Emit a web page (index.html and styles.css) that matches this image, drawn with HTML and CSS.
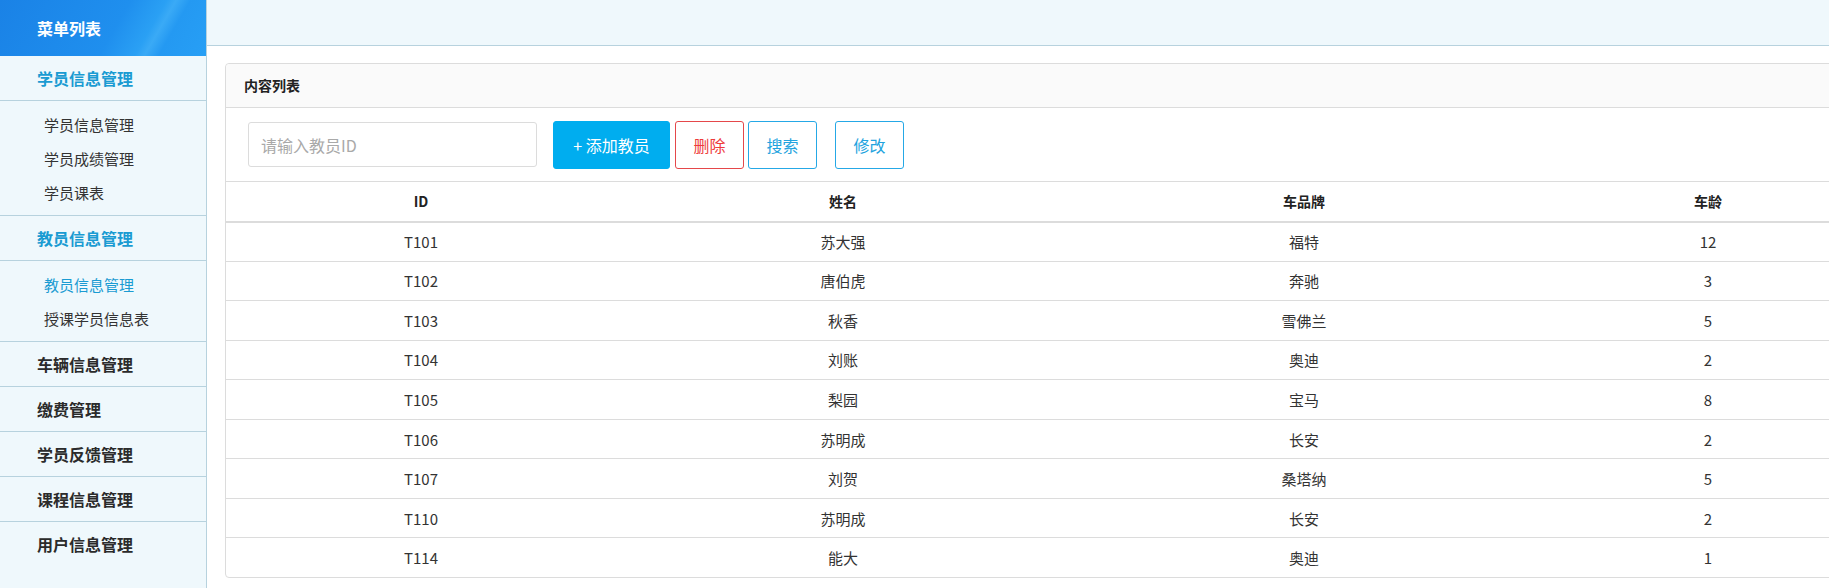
FILE: index.html
```html
<!DOCTYPE html>
<html lang="zh-CN">
<head>
<meta charset="utf-8">
<title>教员信息管理</title>
<link rel="stylesheet" href="styles.css">
</head>
<body>
<div class="app">
  <aside class="sidebar">
    <div class="logo">菜单列表</div>
    <div class="group-title active">学员信息管理</div>
    <ul class="submenu">
      <li>学员信息管理</li>
      <li>学员成绩管理</li>
      <li>学员课表</li>
    </ul>
    <div class="group-title active">教员信息管理</div>
    <ul class="submenu">
      <li class="current">教员信息管理</li>
      <li>授课学员信息表</li>
    </ul>
    <div class="group-title">车辆信息管理</div>
    <div class="group-title">缴费管理</div>
    <div class="group-title">学员反馈管理</div>
    <div class="group-title">课程信息管理</div>
    <div class="group-title last">用户信息管理</div>
  </aside>
  <main class="main">
    <div class="topbar"></div>
    <div class="content">
      <section class="panel">
        <div class="panel-head">内容列表</div>
        <div class="toolbar">
          <input class="search-input" type="text" placeholder="请输入教员ID">
          <button class="btn btn-primary">+&nbsp;添加教员</button>
          <button class="btn btn-danger">删除</button>
          <button class="btn btn-outline">搜索</button>
          <button class="btn btn-outline btn-gap">修改</button>
        </div>
        <table class="grid">
          <colgroup>
            <col class="c1"><col class="c2"><col class="c3"><col class="c4">
          </colgroup>
          <thead>
            <tr><th>ID</th><th>姓名</th><th>车品牌</th><th>车龄</th></tr>
          </thead>
          <tbody>
            <tr><td>T101</td><td>苏大强</td><td>福特</td><td>12</td></tr>
            <tr><td>T102</td><td>唐伯虎</td><td>奔驰</td><td>3</td></tr>
            <tr><td>T103</td><td>秋香</td><td>雪佛兰</td><td>5</td></tr>
            <tr><td>T104</td><td>刘账</td><td>奥迪</td><td>2</td></tr>
            <tr><td>T105</td><td>梨园</td><td>宝马</td><td>8</td></tr>
            <tr><td>T106</td><td>苏明成</td><td>长安</td><td>2</td></tr>
            <tr><td>T107</td><td>刘贺</td><td>桑塔纳</td><td>5</td></tr>
            <tr><td>T110</td><td>苏明成</td><td>长安</td><td>2</td></tr>
            <tr><td>T114</td><td>能大</td><td>奥迪</td><td>1</td></tr>
          </tbody>
        </table>
      </section>
    </div>
  </main>
</div>
</body>
</html>
```

FILE: styles.css
```css
* { box-sizing: border-box; }
html, body {
  margin: 0;
  padding: 0;
  height: 100%;
  overflow: hidden;
  background: #fff;
  font-family: "Noto Sans CJK SC", "Noto Sans", sans-serif;
  color: #333;
}
.app {
  display: flex;
  height: 588px;
  width: 100%;
  overflow: hidden;
}
.sidebar {
  flex: 0 0 207px;
  width: 207px;
  background: #eff8fc;
  border-right: 1px solid #b7d2de;
}
.logo {
  height: 56px;
  line-height: 56px;
  padding-left: 37px;
  color: #fff;
  font-size: 16px;
  font-weight: 700;
  background: linear-gradient(120deg, #1a82e6 0%, #1f8fee 55%, #2aa0f4 70%, #3aaaf6 74%, #2499f2 80%, #279ff5 100%);
}
.group-title {
  height: 45px;
  line-height: 44px;
  padding-left: 37px;
  font-size: 16px;
  font-weight: 700;
  color: #2b2b2b;
  border-bottom: 1px solid #b7d2de;
}
.group-title.active { color: #1a9bd2; }
.group-title.last { border-bottom: none; }
.submenu {
  list-style: none;
  margin: 0;
  padding: 7px 0 5px;
  border-bottom: 1px solid #b7d2de;
}
.submenu li {
  height: 34px;
  line-height: 34px;
  padding-left: 44px;
  font-size: 15px;
  color: #333;
}
.submenu li.current { color: #1a9bd2; }

.main {
  flex: 1 1 auto;
  min-width: 0;
  display: flex;
  flex-direction: column;
  overflow: hidden;
}
.topbar {
  flex: 0 0 46px;
  height: 46px;
  background: #eff8fc;
  border-bottom: 1px solid #b7d2de;
}
.content {
  flex: 1 1 auto;
  padding: 17px 0 0 18px;
  background: #fff;
}
.panel {
  width: 1654px;
  border: 1px solid #dcdcdc;
  border-radius: 4px;
  background: #fff;
}
.panel-head {
  height: 44px;
  line-height: 43px;
  padding-left: 18px;
  font-size: 14px;
  font-weight: 700;
  color: #222;
  background: #fafafa;
  border-bottom: 1px solid #dcdcdc;
  border-radius: 4px 4px 0 0;
}
.toolbar {
  display: flex;
  align-items: center;
  height: 73px;
  padding-left: 22px;
}
.search-input {
  width: 289px;
  height: 45px;
  border: 1px solid #dcdcdc;
  border-radius: 3px;
  padding: 0 12px;
  font-family: inherit;
  font-size: 16px;
  color: #333;
  outline: none;
}
.search-input::placeholder { color: #a9a9a9; }
.btn {
  height: 48px;
  width: 69px;
  border-radius: 3px;
  font-family: inherit;
  font-size: 16px;
  background: #fff;
  padding: 0;
  margin-left: 4px;
  cursor: pointer;
}
.btn-primary {
  width: 117px;
  margin-left: 16px;
  background: #00adef;
  border: 1px solid #00adef;
  color: #fff;
}
.btn-danger {
  margin-left: 5px;
  border: 1px solid #e5474a;
  color: #ee3b3b;
}
.btn-outline {
  border: 1px solid #25a8e6;
  color: #22a3de;
}
.btn-gap { margin-left: 18px; }

.grid {
  width: 100%;
  border-collapse: collapse;
  table-layout: fixed;
  font-size: 15px;
}
.grid .c1 { width: 390px; }
.grid .c2 { width: 454px; }
.grid .c3 { width: 468px; }
.grid .c4 { width: 340px; }
.grid th {
  height: 40px;
  padding: 0;
  font-weight: 700;
  font-size: 14px;
  color: #222;
  border-top: 1px solid #dcdcdc;
  border-bottom: 2px solid #dcdcdc;
  text-align: center;
}
.grid td {
  height: 39.55px;
  padding: 0;
  text-align: center;
  color: #333;
  border-bottom: 1px solid #dcdcdc;
}
.grid tbody tr:last-child td { border-bottom: none; }
```
